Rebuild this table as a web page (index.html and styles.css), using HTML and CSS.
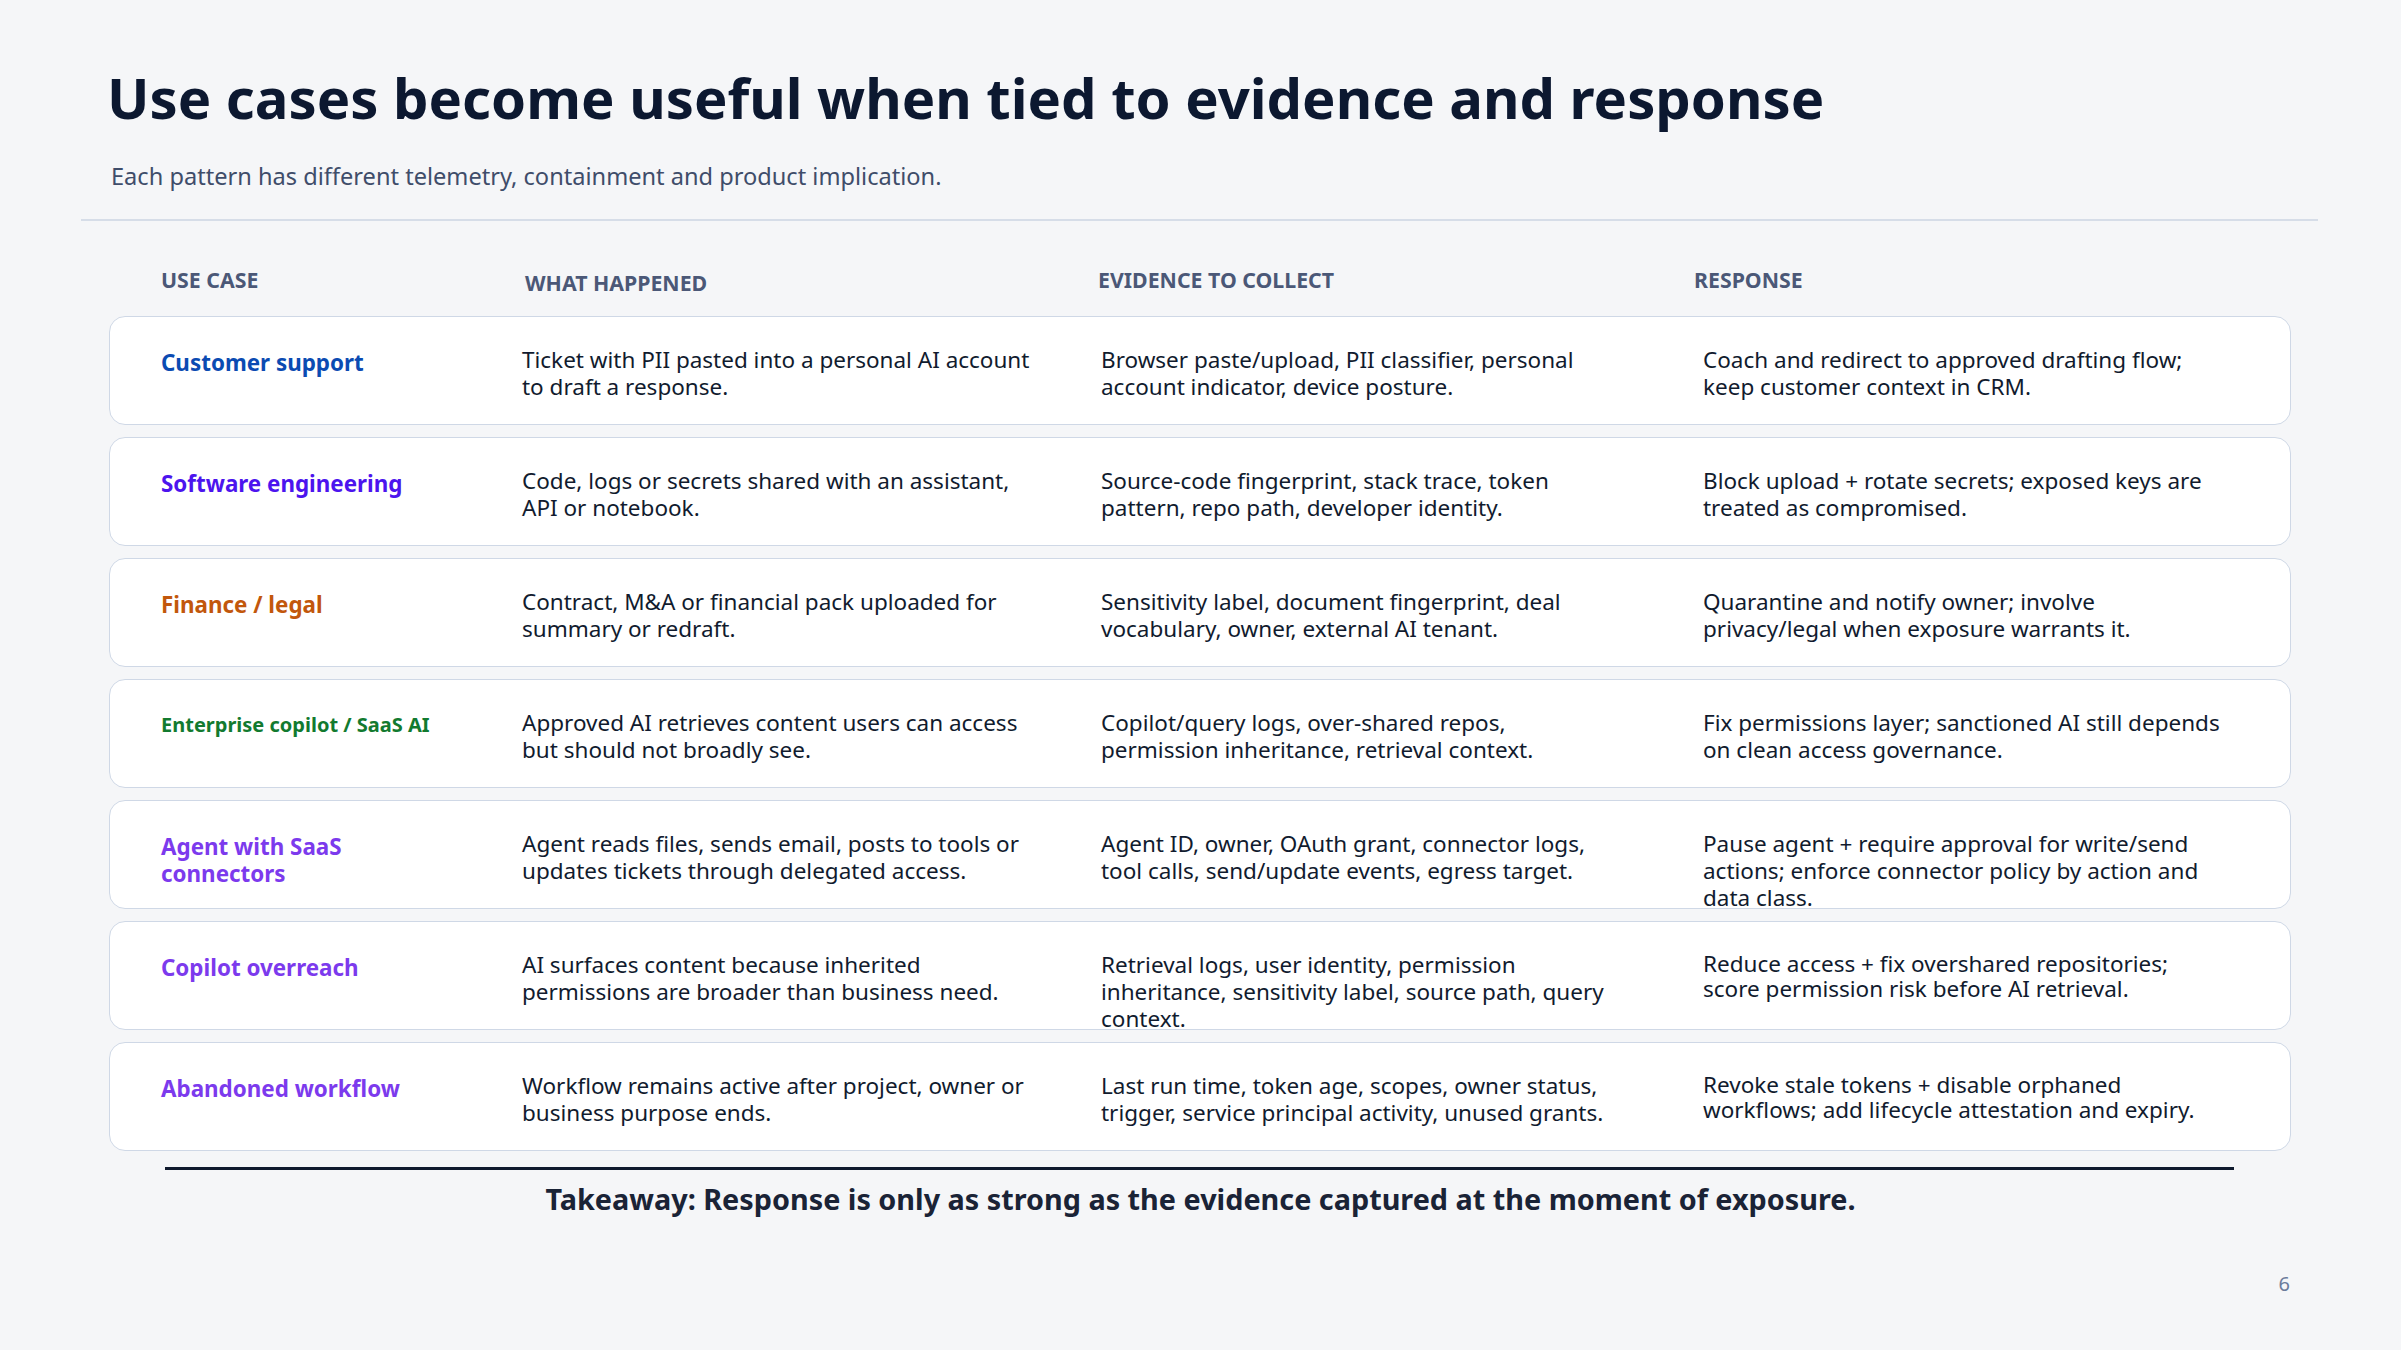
FILE: index.html
```html
<!DOCTYPE html>
<html lang="en">
<head>
<meta charset="utf-8">
<title>Use cases</title>
<link rel="stylesheet" href="styles.css">
</head>
<body>
<main class="slide">
  <header class="head">
    <h1 class="title">Use cases become useful when tied to evidence and response</h1>
    <p class="subtitle">Each pattern has different telemetry, containment and product implication.</p>
  </header>
  <div class="divider"></div>

  <section class="table">
    <div class="thead">
      <div class="th">USE CASE</div>
      <div class="th th-low">WHAT HAPPENED</div>
      <div class="th">EVIDENCE TO COLLECT</div>
      <div class="th">RESPONSE</div>
    </div>

    <div class="card">
      <div class="uc uc-blue">Customer support</div>
      <p class="cell c-what">Ticket with PII pasted into a personal AI account to draft a response.</p>
      <p class="cell c-ev">Browser paste/upload, PII classifier, personal account indicator, device posture.</p>
      <p class="cell c-resp">Coach and redirect to approved drafting flow; keep customer context in CRM.</p>
    </div>

    <div class="card">
      <div class="uc uc-indigo">Software engineering</div>
      <p class="cell c-what">Code, logs or secrets shared with an assistant, API or notebook.</p>
      <p class="cell c-ev">Source-code fingerprint, stack trace, token pattern, repo path, developer identity.</p>
      <p class="cell c-resp">Block upload + rotate secrets; exposed keys are treated as compromised.</p>
    </div>

    <div class="card">
      <div class="uc uc-orange">Finance / legal</div>
      <p class="cell c-what">Contract, M&amp;A or financial pack uploaded for summary or redraft.</p>
      <p class="cell c-ev">Sensitivity label, document fingerprint, deal vocabulary, owner, external AI tenant.</p>
      <p class="cell c-resp">Quarantine and notify owner; involve privacy/legal when exposure warrants it.</p>
    </div>

    <div class="card">
      <div class="uc uc-green uc-small">Enterprise copilot / SaaS AI</div>
      <p class="cell c-what">Approved AI retrieves content users can access but should not broadly see.</p>
      <p class="cell c-ev">Copilot/query logs, over-shared repos, permission inheritance, retrieval context.</p>
      <p class="cell c-resp">Fix permissions layer; sanctioned AI still depends on clean access governance.</p>
    </div>

    <div class="card">
      <div class="uc uc-purple">Agent with SaaS connectors</div>
      <p class="cell c-what">Agent reads files, sends email, posts to tools or updates tickets through delegated access.</p>
      <p class="cell c-ev">Agent ID, owner, OAuth grant, connector logs, tool calls, send/update events, egress target.</p>
      <p class="cell c-resp">Pause agent + require approval for write/send actions; enforce connector policy by action and data class.</p>
    </div>

    <div class="card">
      <div class="uc uc-purple">Copilot overreach</div>
      <p class="cell c-what">AI surfaces content because inherited permissions are broader than business need.</p>
      <p class="cell c-ev">Retrieval logs, user identity, permission inheritance, sensitivity label, source path, query context.</p>
      <p class="cell c-resp c-tight">Reduce access + fix overshared repositories; score permission risk before AI retrieval.</p>
    </div>

    <div class="card">
      <div class="uc uc-purple">Abandoned workflow</div>
      <p class="cell c-what">Workflow remains active after project, owner or business purpose ends.</p>
      <p class="cell c-ev">Last run time, token age, scopes, owner status, trigger, service principal activity, unused grants.</p>
      <p class="cell c-resp c-tight">Revoke stale tokens + disable orphaned workflows; add lifecycle attestation and expiry.</p>
    </div>
  </section>

  <div class="takeaway-rule"></div>
  <p class="takeaway">Takeaway: Response is only as strong as the evidence captured at the moment of exposure.</p>
  <footer class="pagenum">6</footer>
</main>
</body>
</html>
```

FILE: styles.css
```css
* { box-sizing: border-box; }

html, body {
  margin: 0;
  padding: 0;
  background: #f5f6f8;
}

body {
  font-family: "Noto Sans", "Open Sans", sans-serif;
  color: #111b2e;
}

.slide {
  width: 2401px;
  height: 1350px;
  padding-top: 62px;
  overflow: hidden;
}

.head {
  padding-left: 107px;
}

.title {
  margin: 0;
  font-size: 56.2px;
  line-height: 70px;
  font-weight: 700;
  color: #0c1830;
  letter-spacing: 0;
}

.subtitle {
  margin: 29px 0 0 4px;
  font-size: 23.6px;
  line-height: 30px;
  color: #3f4d6a;
}

.divider {
  margin: 28px 83px 0 81px;
  height: 2px;
  background: #d6dde8;
}

.table {
  margin: 46px 110px 0 109px;
  display: flex;
  flex-direction: column;
  gap: 12px;
}

.thead {
  display: grid;
  grid-template-columns: 364px 573px 596px 1fr;
  padding-left: 52px;
  margin-bottom: 8px;
}

.th {
  font-size: 21.3px;
  line-height: 26px;
  font-weight: 700;
  color: #4b5877;
}

.th-low {
  padding-top: 3px;
}

.card {
  display: grid;
  grid-template-columns: 361px 579px 602px 1fr;
  align-items: start;
  height: 109px;
  padding: 29px 0 0 51px;
  background: #ffffff;
  border: 1.5px solid #cfd8e6;
  border-radius: 16px;
}

.uc {
  padding-top: 2.5px;
  max-width: 270px;
  font-size: 22.4px;
  line-height: 27.5px;
  font-weight: 700;
}

.uc-small {
  padding-top: 3.5px;
  max-width: none;
  font-size: 20px;
  line-height: 24px;
}

.uc-blue { color: #0b4bb2; }
.uc-indigo { color: #4c14ee; }
.uc-orange { color: #c2570c; }
.uc-green { color: #127a2f; }
.uc-purple { color: #7c3aed; }

.cell {
  margin: 0;
  font-size: 22.5px;
  line-height: 27px;
  color: #111b2e;
}

.c-what { max-width: 520px; }
.c-ev { max-width: 525px; }
.c-resp { max-width: 525px; }
.c-tight { line-height: 25px; }

.takeaway-rule {
  margin: 16px 167px 0 165px;
  height: 3px;
  background: #0f1a2e;
}

.takeaway {
  margin: 12px 0 0;
  text-align: center;
  font-size: 28.8px;
  line-height: 34px;
  font-weight: 700;
  color: #1a2336;
}

.pagenum {
  margin-top: 56px;
  padding-right: 111px;
  text-align: right;
  font-size: 20px;
  line-height: 24px;
  color: #6b7c9b;
}
```
